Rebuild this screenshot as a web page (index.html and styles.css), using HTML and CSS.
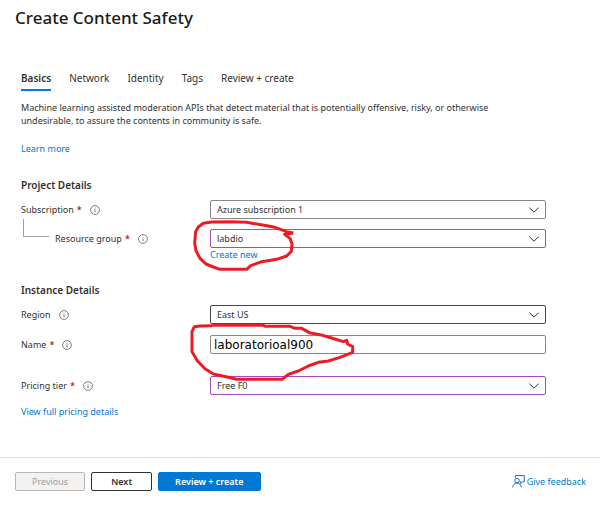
FILE: index.html
```html
<!DOCTYPE html>
<html lang="en">
<head>
<meta charset="utf-8">
<meta name="viewport" content="width=device-width, initial-scale=1">
<title>Create Content Safety</title>
<link rel="stylesheet" href="styles.css">
</head>
<body>
<svg class="defs" aria-hidden="true">
  <symbol id="info" viewBox="0 0 10 10">
    <circle cx="5" cy="5" r="4.4" fill="none" stroke="currentColor" stroke-width=".8"/>
    <path d="M5 4.3v3M5 2.6v.9" fill="none" stroke="currentColor" stroke-width=".8"/>
  </symbol>
  <symbol id="chevron" viewBox="0 0 10 6">
    <path d="M.4 .6 5 5.2 9.6 .6" fill="none" stroke="currentColor" stroke-width="1"/>
  </symbol>
</svg>
<main class="page">
  <h1 class="title">Create Content Safety</h1>
  <nav class="tabs">
    <a class="tab active" href="#basics">Basics</a>
    <a class="tab" href="#network">Network</a>
    <a class="tab" href="#identity">Identity</a>
    <a class="tab" href="#tags">Tags</a>
    <a class="tab" href="#review">Review + create</a>
  </nav>
  <form class="form" id="create-form">
    <p class="intro">Machine learning assisted moderation APIs that detect material that is potentially offensive, risky, or otherwise undesirable, to assure the contents in community is safe.</p>
    <a class="link learn" href="#learn">Learn more</a>

    <h2 class="section">Project Details</h2>
    <div class="row">
      <label class="label" for="subscription">Subscription <span class="req">*</span><svg class="info"><use href="#info"/></svg></label>
      <div class="control">
        <select class="box" id="subscription"><option>Azure subscription 1</option></select>
        <svg class="chevron"><use href="#chevron"/></svg>
      </div>
    </div>
    <div class="row group">
      <label class="label nested" for="group"><span class="branch"></span>Resource group <span class="req">*</span><svg class="info"><use href="#info"/></svg></label>
      <div class="control">
        <select class="box changed" id="group"><option>labdio</option></select>
        <svg class="chevron"><use href="#chevron"/></svg>
        <a class="link create" href="#new">Create new</a>
        <svg class="mark mark-group" viewBox="0 0 600 270" aria-hidden="true">
          <path d="M340 129 320 125 285 112 260 107 235 103 200 97 150 95 95 96 70 100 55 111 47 125 44 160 48 182 60 205 78 222 100 231 120 238H200L212 227 245 215 290 208 320 198 334 184 336 162 330 145 314 133 340 129"/>
        </svg>
      </div>
    </div>

    <h2 class="section instance">Instance Details</h2>
    <div class="row region">
      <label class="label" for="region">Region<svg class="info"><use href="#info"/></svg></label>
      <div class="control">
        <select class="box dark" id="region"><option>East US</option></select>
        <svg class="chevron"><use href="#chevron"/></svg>
      </div>
    </div>
    <div class="row name">
      <label class="label" for="name">Name <span class="req">*</span><svg class="info"><use href="#info"/></svg></label>
      <div class="control">
        <input class="box name-box" id="name" type="text" value="laboratorioal900">
        <svg class="mark mark-name" viewBox="0 0 600 360" aria-hidden="true">
          <path d="M97 106H250L255 109H330L345 115H365L388 128 420 134 455 144 490 155 500 151 503 162 518 170V187L480 202 445 213 415 217 385 228 355 243 325 253 306 268H170L145 262 100 252 75 236 52 212 36 185V125L43 110 60 108 97 107"/>
        </svg>
      </div>
    </div>
    <div class="row">
      <label class="label" for="tier">Pricing tier <span class="req">*</span><svg class="info"><use href="#info"/></svg></label>
      <div class="control">
        <select class="box changed" id="tier"><option>Free F0</option></select>
        <svg class="chevron"><use href="#chevron"/></svg>
      </div>
    </div>
    <a class="link pricing" href="#pricing">View full pricing details</a>
  </form>
</main>
<footer class="footer">
  <button class="btn previous" type="button" disabled>Previous</button>
  <button class="btn next" type="button">Next</button>
  <button class="btn primary" type="submit" form="create-form">Review + create</button>
  <a class="feedback" href="#feedback">
    <svg class="feedback-icon" viewBox="0 0 13 13" aria-hidden="true">
      <path d="M3.3 2.8V.6h9v6.2h-1.6L8.7 8.6V6.8H8"/>
      <circle cx="5" cy="5.6" r="2.3"/>
      <path d="M.7 12.3C1 9.7 2.7 8 5 8s4 1.700 4.300 4.300"/>
    </svg>Give feedback</a>
</footer>
</body>
</html>
```
FILE: styles.css
```css
* {
  box-sizing: border-box;
}

body {
  margin: 0;
  background: #fff;
  color: #323130;
  font: 9px/13px "Noto Sans", "Open Sans", sans-serif;
}

.defs {
  position: absolute;
  width: 0;
  height: 0;
}

.title {
  margin: 0;
  padding: 6px 15px 0;
  color: #1b1a19;
  font-size: 17px;
  font-weight: 500;
  line-height: 24px;
}

.tabs {
  display: flex;
  gap: 18px;
  padding: 40px 21px 0;
  font-size: 10px;
  line-height: 16px;
}

.tab {
  padding-bottom: 3px;
  border-bottom: 2px solid transparent;
  color: inherit;
  text-decoration: none;
}

.tab.active {
  border-color: #0078d4;
  font-weight: 600;
}

.form {
  padding: 10px 54px 0 21px;
}

.intro {
  max-width: 490px;
  margin: 0;
}

.link {
  display: table;
  color: #0078d4;
  text-decoration: none;
}

.learn {
  margin-top: 15px;
}

.section {
  margin: 23px 0 8px;
  font-size: 10px;
  font-weight: 600;
  line-height: 14px;
}

.instance {
  margin-top: 22px;
}

.row {
  display: grid;
  grid-template-columns: 189px 1fr;
  align-items: start;
  margin-bottom: 10px;
}

.label {
  display: flex;
  align-items: center;
  height: 19px;
}

.req {
  margin-left: 3px;
  color: #a4262c;
  font-weight: 600;
}

.info {
  width: 10px;
  height: 10px;
  margin-left: 8px;
  color: #605e5c;
}

.branch {
  align-self: flex-start;
  width: 26px;
  height: 18px;
  margin: -10px 6px 0 2px;
  border: solid #a19f9d;
  border-width: 0 0 1px 1px;
}

.control {
  position: relative;
}

.box {
  display: block;
  width: 100%;
  height: 19px;
  padding: 0 6px;
  border: 1px solid #8a8886;
  border-radius: 2px;
  background: #fff;
  color: inherit;
  font: inherit;
  appearance: none;
}

.changed {
  border-color: #a04cc0;
}

.dark {
  border-color: #484644;
}

.name-box {
  padding: 0 3px;
  color: #000;
  font: 12px/17px "DejaVu Sans", Arial, sans-serif;
}

.chevron {
  position: absolute;
  top: 7px;
  right: 7px;
  width: 10px;
  height: 6px;
  pointer-events: none;
}

.mark {
  position: absolute;
  z-index: 1;
  left: -30px;
  width: 200px;
  fill: none;
  stroke: #ed1c24;
  stroke-width: 9;
  stroke-linejoin: round;
  pointer-events: none;
}

.mark-group {
  top: -39px;
  height: 90px;
}

.mark-name {
  top: -45px;
  height: 120px;
}

.group {
  margin-bottom: 0;
}

.region {
  margin-bottom: 11px;
}

.name {
  margin-bottom: 22px;
}

.footer {
  display: flex;
  align-items: center;
  gap: 6px;
  margin-top: 39px;
  padding: 14px 14px 14px 15px;
  border-top: 1px solid #dcdad8;
}

.btn {
  min-width: 61px;
  height: 19px;
  padding: 0 16px;
  border: 1px solid #323130;
  border-radius: 2px;
  background: #fff;
  color: #323130;
  font: 600 9px/17px "Noto Sans", "Open Sans", sans-serif;
}

.previous {
  border-color: #b8b6b4;
  background: #f3f2f1;
  color: #a19f9d;
  font-weight: 400;
}

.primary {
  border-color: #0078d4;
  background: #0078d4;
  color: #fff;
}

.feedback {
  display: flex;
  align-items: center;
  gap: 2px;
  margin-left: auto;
  color: #0078d4;
  text-decoration: none;
}

.feedback-icon {
  width: 13px;
  height: 13px;
  fill: none;
  stroke: #1866c9;
  stroke-width: 1;
}
```
